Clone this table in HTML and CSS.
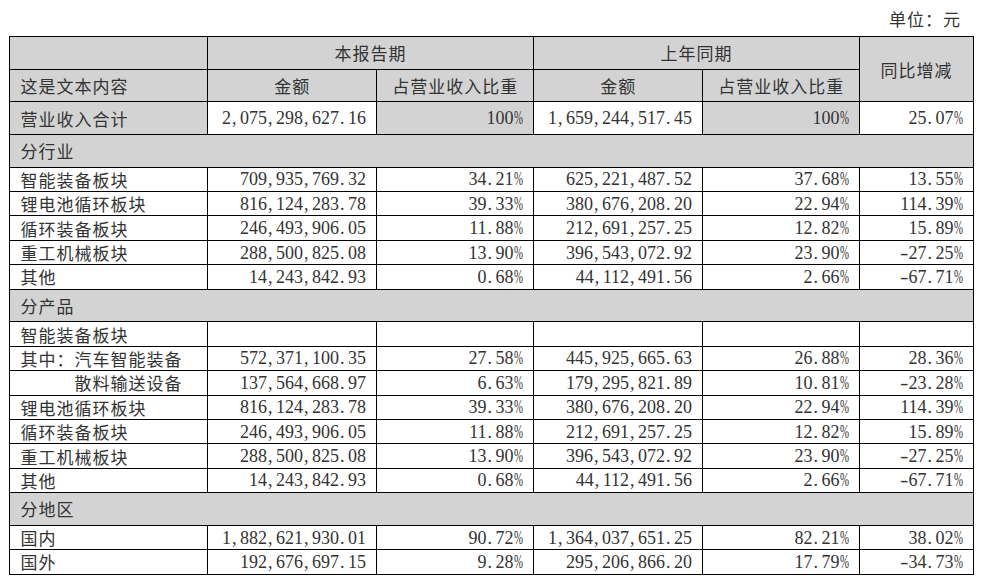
FILE: index.html
```html
<!DOCTYPE html>
<html lang="zh">
<head>
<meta charset="utf-8">
<title>营业收入构成</title>
<link rel="stylesheet" href="styles.css">
</head>
<body>
<div class="unit">单位：元</div>
<table class="rev">
<colgroup>
<col class="c1"><col class="c2"><col class="c3"><col class="c4"><col class="c5"><col class="c6">
</colgroup>
<tr class="hd">
<td class="g"></td>
<td class="g ctr" colspan="2">本报告期</td>
<td class="g ctr" colspan="2">上年同期</td>
<td class="g ctr" rowspan="2">同比增减</td>
</tr>
<tr class="hd">
<td class="g">这是文本内容</td>
<td class="g ctr">金额</td>
<td class="g ctr">占营业收入比重</td>
<td class="g ctr">金额</td>
<td class="g ctr">占营业收入比重</td>
</tr>
<tr class="hd">
<td class="g">营业收入合计</td>
<td class="n">2<i>,</i>075<i>,</i>298<i>,</i>627<i>.</i>16</td>
<td class="n g">100<b>%</b></td>
<td class="n">1<i>,</i>659<i>,</i>244<i>,</i>517<i>.</i>45</td>
<td class="n g">100<b>%</b></td>
<td class="n">25<i>.</i>07<b>%</b></td>
</tr>
<tr class="hd"><td class="g" colspan="6">分行业</td></tr>
<tr class="r">
<td>智能装备板块</td>
<td class="n">709<i>,</i>935<i>,</i>769<i>.</i>32</td>
<td class="n">34<i>.</i>21<b>%</b></td>
<td class="n">625<i>,</i>221<i>,</i>487<i>.</i>52</td>
<td class="n">37<i>.</i>68<b>%</b></td>
<td class="n">13<i>.</i>55<b>%</b></td>
</tr>
<tr class="r">
<td>锂电池循环板块</td>
<td class="n">816<i>,</i>124<i>,</i>283<i>.</i>78</td>
<td class="n">39<i>.</i>33<b>%</b></td>
<td class="n">380<i>,</i>676<i>,</i>208<i>.</i>20</td>
<td class="n">22<i>.</i>94<b>%</b></td>
<td class="n">114<i>.</i>39<b>%</b></td>
</tr>
<tr class="r">
<td>循环装备板块</td>
<td class="n">246<i>,</i>493<i>,</i>906<i>.</i>05</td>
<td class="n">11<i>.</i>88<b>%</b></td>
<td class="n">212<i>,</i>691<i>,</i>257<i>.</i>25</td>
<td class="n">12<i>.</i>82<b>%</b></td>
<td class="n">15<i>.</i>89<b>%</b></td>
</tr>
<tr class="r">
<td>重工机械板块</td>
<td class="n">288<i>,</i>500<i>,</i>825<i>.</i>08</td>
<td class="n">13<i>.</i>90<b>%</b></td>
<td class="n">396<i>,</i>543<i>,</i>072<i>.</i>92</td>
<td class="n">23<i>.</i>90<b>%</b></td>
<td class="n"><em>-</em>27<i>.</i>25<b>%</b></td>
</tr>
<tr class="r">
<td>其他</td>
<td class="n">14<i>,</i>243<i>,</i>842<i>.</i>93</td>
<td class="n">0<i>.</i>68<b>%</b></td>
<td class="n">44<i>,</i>112<i>,</i>491<i>.</i>56</td>
<td class="n">2<i>.</i>66<b>%</b></td>
<td class="n"><em>-</em>67<i>.</i>71<b>%</b></td>
</tr>
<tr class="hd"><td class="g" colspan="6">分产品</td></tr>
<tr class="r">
<td>智能装备板块</td>
<td></td><td></td><td></td><td></td><td></td>
</tr>
<tr class="r">
<td>其中：汽车智能装备</td>
<td class="n">572<i>,</i>371<i>,</i>100<i>.</i>35</td>
<td class="n">27<i>.</i>58<b>%</b></td>
<td class="n">445<i>,</i>925<i>,</i>665<i>.</i>63</td>
<td class="n">26<i>.</i>88<b>%</b></td>
<td class="n">28<i>.</i>36<b>%</b></td>
</tr>
<tr class="r">
<td class="ind">散料输送设备</td>
<td class="n">137<i>,</i>564<i>,</i>668<i>.</i>97</td>
<td class="n">6<i>.</i>63<b>%</b></td>
<td class="n">179<i>,</i>295<i>,</i>821<i>.</i>89</td>
<td class="n">10<i>.</i>81<b>%</b></td>
<td class="n"><em>-</em>23<i>.</i>28<b>%</b></td>
</tr>
<tr class="r">
<td>锂电池循环板块</td>
<td class="n">816<i>,</i>124<i>,</i>283<i>.</i>78</td>
<td class="n">39<i>.</i>33<b>%</b></td>
<td class="n">380<i>,</i>676<i>,</i>208<i>.</i>20</td>
<td class="n">22<i>.</i>94<b>%</b></td>
<td class="n">114<i>.</i>39<b>%</b></td>
</tr>
<tr class="r">
<td>循环装备板块</td>
<td class="n">246<i>,</i>493<i>,</i>906<i>.</i>05</td>
<td class="n">11<i>.</i>88<b>%</b></td>
<td class="n">212<i>,</i>691<i>,</i>257<i>.</i>25</td>
<td class="n">12<i>.</i>82<b>%</b></td>
<td class="n">15<i>.</i>89<b>%</b></td>
</tr>
<tr class="r">
<td>重工机械板块</td>
<td class="n">288<i>,</i>500<i>,</i>825<i>.</i>08</td>
<td class="n">13<i>.</i>90<b>%</b></td>
<td class="n">396<i>,</i>543<i>,</i>072<i>.</i>92</td>
<td class="n">23<i>.</i>90<b>%</b></td>
<td class="n"><em>-</em>27<i>.</i>25<b>%</b></td>
</tr>
<tr class="r">
<td>其他</td>
<td class="n">14<i>,</i>243<i>,</i>842<i>.</i>93</td>
<td class="n">0<i>.</i>68<b>%</b></td>
<td class="n">44<i>,</i>112<i>,</i>491<i>.</i>56</td>
<td class="n">2<i>.</i>66<b>%</b></td>
<td class="n"><em>-</em>67<i>.</i>71<b>%</b></td>
</tr>
<tr class="hd"><td class="g" colspan="6">分地区</td></tr>
<tr class="r">
<td>国内</td>
<td class="n">1<i>,</i>882<i>,</i>621<i>,</i>930<i>.</i>01</td>
<td class="n">90<i>.</i>72<b>%</b></td>
<td class="n">1<i>,</i>364<i>,</i>037<i>,</i>651<i>.</i>25</td>
<td class="n">82<i>.</i>21<b>%</b></td>
<td class="n">38<i>.</i>02<b>%</b></td>
</tr>
<tr class="r">
<td>国外</td>
<td class="n">192<i>,</i>676<i>,</i>697<i>.</i>15</td>
<td class="n">9<i>.</i>28<b>%</b></td>
<td class="n">295<i>,</i>206<i>,</i>866<i>.</i>20</td>
<td class="n">17<i>.</i>79<b>%</b></td>
<td class="n"><em>-</em>34<i>.</i>73<b>%</b></td>
</tr>
</table>
</body>
</html>
```
FILE: styles.css
```css
html, body {
  margin: 0;
  padding: 0;
  background: #ffffff;
}
body {
  padding: 8px;
  color: #333333;
  font-family: "Noto Sans CJK SC", "Liberation Serif", sans-serif;
  font-size: 17px;
  letter-spacing: 1px;
}
.unit {
  height: 28px;
  line-height: 22px;
  text-align: right;
  padding-right: 11px;
  width: 964px;
  box-sizing: border-box;
}
.rev {
  border-collapse: collapse;
  table-layout: fixed;
  width: 964px;
  margin-left: 0.5px;
}
.c1 { width: 198px; }
.c2 { width: 169.5px; }
.c3 { width: 156.5px; }
.c4 { width: 169.5px; }
.c5 { width: 156.5px; }
.c6 { width: 114px; }
.rev td {
  border: 1px solid #000000;
  padding: 0 10px 0 11px;
  line-height: 1;
  white-space: nowrap;
  vertical-align: middle;
  background: #ffffff;
}
.rev td.g { background: #d3d3d3; }
.rev tr.hd { height: 32.67px; }
.rev tr.r { height: 24.42px; }
.rev td.ctr { text-align: center; }
.rev td.ind { padding-left: 65px; }
.rev td.n {
  text-align: right;
  font-family: "Liberation Serif", serif;
  font-size: 18px;
  letter-spacing: 0;
  padding-right: 10px;
}
.n i {
  font-style: normal;
  display: inline-block;
  width: 9px;
  text-align: left;
  padding-left: 1px;
  box-sizing: border-box;
}
.n b {
  font-weight: normal;
  display: inline-block;
  width: 9px;
  transform: scaleX(0.6);
  transform-origin: left center;
}
.n em {
  font-style: normal;
  display: inline-block;
  width: 6px;
  margin-right: 3px;
  transform: scaleX(1.4);
  transform-origin: left center;
}
```
